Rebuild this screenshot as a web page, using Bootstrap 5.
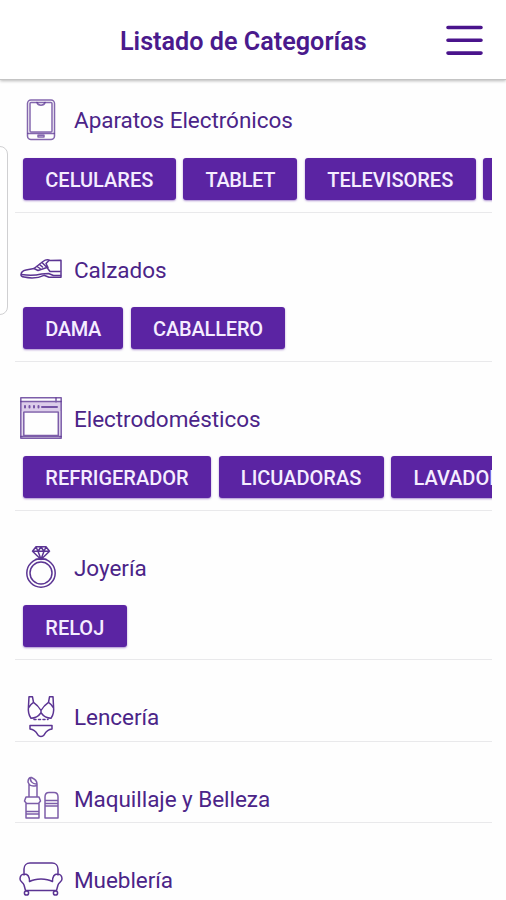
<!DOCTYPE html>
<html lang="es">
<head>
<meta charset="utf-8">
<meta name="viewport" content="width=device-width, initial-scale=1">
<title>Listado de Categorías</title>
<link href="https://cdn.jsdelivr.net/npm/bootstrap@5.3.0/dist/css/bootstrap.min.css" rel="stylesheet">
<style>
body { font-family: Roboto, "Liberation Sans", sans-serif; color: #4b2488; background: #fefefe; height: 900px; overflow: hidden; }
.topbar { height: 80px; background: #fff; border-bottom: 1px solid #c4c4c4; box-shadow: 0 1px 3px rgba(0,0,0,.28); padding: 3px 23px 0 120px; }
.topbar h1 { font-size: 25.2px; font-weight: 600; color: #4a1a8c; white-space: nowrap; padding-top: 2px; }
.menu-btn { line-height: 0; }
.cats { padding: 0 14px 0 15px; }
.cat { height: 149.2px; padding-top: 35px; border-bottom: 1.5px solid #e9e9eb; }
.cat:first-child { height: 132.8px; padding-top: 18.500px; }
.cat.plain { height: 81.4px; }
.cat-head { height: 43px; padding-left: 5px; gap: 12px; }
.cat-head svg { width: 42px; height: 42px; flex: none; fill: none; stroke: #5b3493; stroke-width: 1.5; stroke-linejoin: round; stroke-linecap: round; overflow: visible; }
.cat-head h2 { font-size: 22.5px; font-weight: 400; line-height: 1.2; letter-spacing: -.05px; white-space: nowrap; padding-top: 1.500px; }
.chips { padding: 16px 0 6px 8px; gap: 7.6px; }
.chip { height: 42px; border: 0; border-radius: 3px; background: #5b24a3; color: #f5edff; font-size: 20px; font-weight: 500; padding: 3px 22.3px 0; line-height: 1; box-shadow: 0 1px 2px rgba(91,36,163,.5); white-space: nowrap; flex: none; }
.chip-tight { letter-spacing: -.18px; }
.chip-tighter { letter-spacing: -.36px; }
.edge-panel { left: -10px; top: 146px; width: 18px; height: 169px; border: 1.3px solid #d0d0d2; border-radius: 8px; background: #fff; }
</style>
</head>
<body>
<header class="topbar d-flex align-items-center justify-content-between position-relative">
  <h1 class="m-0">Listado de Categorías</h1>
  <button class="menu-btn btn p-0 border-0" aria-label="Menú">
    <svg width="37" height="32" viewBox="0 0 37 32" stroke="#4a148c" stroke-width="3.6" stroke-linecap="round"><path d="M2 2.500H35M2 15.300H35M2 28.100H35"/></svg>
  </button>
</header>
<div class="edge-panel position-absolute"></div>
<main class="cats">
  <section class="cat">
    <div class="cat-head d-flex align-items-center">
      <svg viewBox="0 0 42 42" stroke-opacity=".75"><rect x="7.5" y="1" width="27" height="39.5" rx="3.5"/><rect x="10" y="3.5" width="22" height="29.5" rx="1"/><path d="M17 3.5c1 3.5 7 3.5 8 0M8 34.5H34M18 36.3h6v1.6h-6z"/></svg>
      <h2 class="m-0">Aparatos Electrónicos</h2>
    </div>
    <div class="chips d-flex overflow-hidden">
      <button class="chip">CELULARES</button><button class="chip chip-tighter">TABLET</button><button class="chip">TELEVISORES</button><button class="chip" aria-label="Más"></button>
    </div>
  </section>
  <section class="cat">
    <div class="cat-head d-flex align-items-center">
      <svg viewBox="0 0 42 42"><path d="M1 27c0-3 2-4.500 5-5l8-1.500 9-7c2-1.500 5-2 7-1l11-.2v17H29l-5-2c-6 3-15 2.800-20 1.800-2-.4-3-1-3-2.100z"/><path d="M1.500 26.500c6 1 14 1 20-.5l7-.5 5 2h7M14 20.500l4 2 9-3M22 14.500l5 5 3 4h10M29 12.500l-3 3 2 4M17 18.500l3 2M19.500 16.500l3 2.500"/></svg>
      <h2 class="m-0">Calzados</h2>
    </div>
    <div class="chips d-flex overflow-hidden">
      <button class="chip chip-tighter">DAMA</button><button class="chip chip-tight">CABALLERO</button>
    </div>
  </section>
  <section class="cat">
    <div class="cat-head d-flex align-items-center">
      <svg viewBox="0 0 42 42" stroke-opacity=".8"><rect x="1" y="5" width="40" height="9" fill="#dccdea" stroke="none"/><path d="M2.200 14v26.500M39.800 14v26.500" stroke="#dccdea"/><rect x=".8" y=".8" width="40.400" height="40.400"/><path d="M1 4.500H41M36 1v4M3.800 38.500V15h34.500v23.500zM1 39.500H41"/><path d="M5 9v1.500M9.500 9v1.500M14 9v1.500M18.500 9v1.500M22 10H37" stroke-width="2"/></svg>
      <h2 class="m-0">Electrodomésticos</h2>
    </div>
    <div class="chips d-flex overflow-hidden">
      <button class="chip">REFRIGERADOR</button><button class="chip">LICUADORAS</button><button class="chip">LAVADORAS</button>
    </div>
  </section>
  <section class="cat">
    <div class="cat-head d-flex align-items-center">
      <svg viewBox="0 1 42 42"><circle cx="21" cy="27" r="14.200"/><circle cx="21" cy="27" r="11"/><path d="M16 .8h10l3.500 4.500L21 13.500l-8.500-8.200zM12.500 5.300h17M16 1l2 4.300 3 8 3-8 2-4.300M18 5.300l3-4.300 3 4.300M16 13.300h10"/></svg>
      <h2 class="m-0">Joyería</h2>
    </div>
    <div class="chips d-flex overflow-hidden">
      <button class="chip">RELOJ</button>
    </div>
  </section>
  <section class="cat plain">
    <div class="cat-head d-flex align-items-center">
      <svg viewBox="0 0 42 42"><path d="M9 .8h3.500l1 5.500C16 8 19 11 21 14.500 23 11 26 8 28.500 6.300l1-5.500H33l.5 9c.5 5-.5 10-2.500 12.500-4 0-7.500-2-10-5.500-2.500 3.500-6 5.500-10 5.500-2-2.500-3-7.500-2.500-12.500zM8.500 12c1.500-3 3-4.500 5-5.700M33.500 12c-1.500-3-3-4.500-5-5.700M21 14.500v2.300"/><path d="M14 23.500h14" stroke-dasharray="2 2.500"/><path d="M10 29.500h22v3.500c-5 .5-6.500 3.500-8 6-1.500 2-4.500 2-6 0-1.500-2.500-3-5.500-8-6z"/></svg>
      <h2 class="m-0">Lencería</h2>
    </div>
  </section>
  <section class="cat plain">
    <div class="cat-head d-flex align-items-center">
      <svg viewBox="0 0 42 42" stroke-opacity=".8"><path d="M9 20V7L8 5c0-3 1.500-5 3.500-4.500C15 2 17 4.500 17 7v13M9 7c1 2 4 2.500 8 1.500M10.500 1c-.5 3 2 6 5.500 6M6 20h13l1.500 4-2 2.500h-12l-2-2.500zM6 26.500V41h13V26.500M6 34.500h13M6 37h13"/><path d="M25 41V20c0-3 2-4.500 4-4.500h5c2 0 4 1.500 4 4.500v21zM25 23.500h13M25 26.500h13M25 29h13"/></svg>
      <h2 class="m-0">Maquillaje y Belleza</h2>
    </div>
  </section>
  <section class="cat plain">
    <div class="cat-head d-flex align-items-center">
      <svg viewBox="0 0 42 42"><path d="M4 16v-6c0-3.500 2.500-6 6-6h22c3.500 0 6 2.500 6 6v6M9.500 22.500c6-3.500 17-3.500 23 0M9.500 22.500C9.500 18 7.500 15 4.500 15S0 17.500 0 20s3 3.500 4 6l1.500 5.500h31L38 26c1-2.500 4-3.500 4-6s-1.500-5-4.500-5-5 3-5 7.500"/><circle cx="6.500" cy="34" r="2.100"/><circle cx="35.500" cy="34" r="2.100"/></svg>
      <h2 class="m-0">Mueblería</h2>
    </div>
  </section>
</main>
<script src="https://cdn.jsdelivr.net/npm/bootstrap@5.3.0/dist/js/bootstrap.bundle.min.js"></script>
</body>
</html>
